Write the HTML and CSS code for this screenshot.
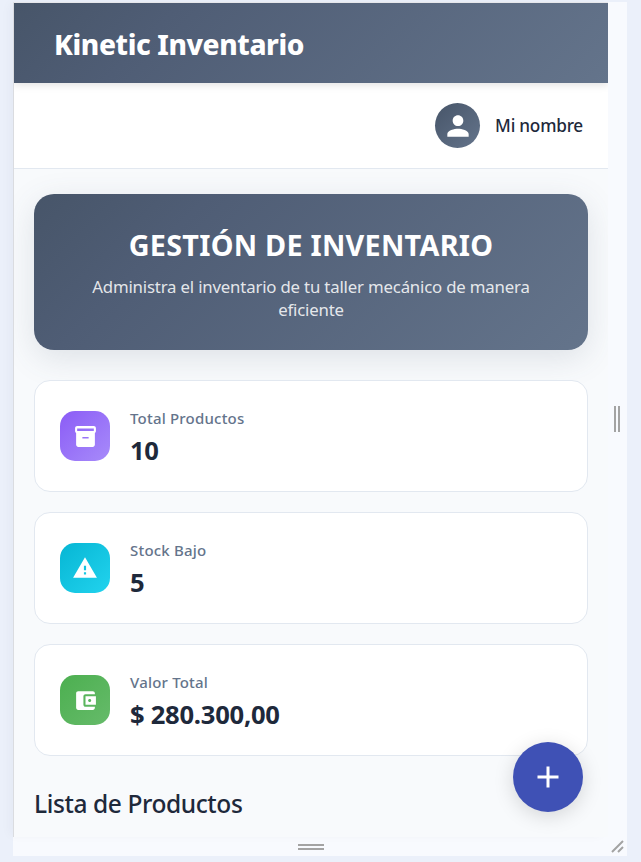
FILE: index.html
```html
<!DOCTYPE html>
<html lang="es">
<head>
<meta charset="utf-8">
<title>Kinetic Inventario</title>
<link rel="stylesheet" href="styles.css">
</head>
<body>
<div class="device">
  <div class="screen">
    <header class="topbar"><span class="brand">Kinetic Inventario</span></header>
    <div class="userbar">
      <div class="avatar"><svg width="32" height="32" viewBox="0 0 24 24" fill="currentColor"><path d="M12 12c2.21 0 4-1.79 4-4s-1.79-4-4-4-4 1.79-4 4 1.79 4 4 4zm0 2c-2.67 0-8 1.34-8 4v2h16v-2c0-2.66-5.33-4-8-4z"/></svg></div>
      <span class="username">Mi nombre</span>
    </div>
    <main class="content">
      <section class="hero">
        <h1>GESTIÓN DE INVENTARIO</h1>
        <p>Administra el inventario de tu taller mecánico de manera<br>eficiente</p>
      </section>
      <section class="stats">
        <article class="card">
          <div class="icon purple"><svg width="25" height="25" viewBox="0 0 24 24" fill="currentColor"><path fill-rule="evenodd" d="M20 2H4c-1 0-2 .9-2 2v3.010c0 .72.43 1.340 1 1.690V20c0 1.100 1.100 2 2 2h14c.9 0 2-.9 2-2V8.700c.57-.35 1-.97 1-1.690V4c0-1.100-1-2-2-2zm-5 12H9v-1.500h6V14zm5-7.200H4V4.400h16v2.400z"/></svg></div>
          <div><div class="label">Total Productos</div><div class="value">10</div></div>
        </article>
        <article class="card">
          <div class="icon cyan"><svg width="26" height="26" viewBox="0 0 24 24" fill="currentColor"><path d="M1 21h22L12 2 1 21zm12-3h-2v-2h2v2zm0-4h-2v-4h2v4z"/></svg></div>
          <div><div class="label">Stock Bajo</div><div class="value">5</div></div>
        </article>
        <article class="card">
          <div class="icon green"><svg width="25" height="25" viewBox="0 0 24 24" fill="currentColor"><path d="M21 18v1c0 1.100-.9 2-2 2H5c-1.110 0-2-.9-2-2V5c0-1.100.89-2 2-2h14c1.100 0 2 .9 2 2v1h-9c-1.110 0-2 .9-2 2v8c0 1.100.89 2 2 2h9zm-9-2h10V8H12v8zm4-2.500c-.83 0-1.500-.67-1.500-1.500s.67-1.500 1.500-1.500 1.500.67 1.500 1.500-.67 1.500-1.500 1.500z"/></svg></div>
          <div><div class="label">Valor Total</div><div class="value">$ 280.300,00</div></div>
        </article>
      </section>
      <h2>Lista de Productos</h2>
    </main>
    <button class="fab" aria-label="Agregar"><svg width="36" height="36" viewBox="0 0 24 24" fill="currentColor"><path d="M19 13h-6v6h-2v-6H5v-2h6V5h2v6h6z"/></svg></button>
  </div>
  <div class="grip-right"><i></i><i></i></div>
  <div class="grip-bottom"><i></i><i></i></div>
  <svg class="grip-corner" width="14" height="14" viewBox="0 0 14 14" stroke="#a3a3a3" stroke-width="2" fill="none"><path d="M1 12 12 1M7 12l5-5"/></svg>
</div>
</body>
</html>
```

FILE: styles.css
```css
* { box-sizing: border-box; }
body {
  margin: 0;
  height: 862px;
  padding: 2px 14px 6px 13px;
  overflow: hidden;
  background: #ebf0fa;
  font-family: "Noto Sans", "Open Sans", sans-serif;
  color: #1e293b;
}
.device {
  display: grid;
  grid-template-columns: 595px 19px;
  grid-template-rows: 835px 19px;
  background: #f8fafe;
}
.screen {
  position: relative;
  overflow: hidden;
  background: #f8fafc;
  border-left: 1px solid #dadce0;
  border-top: 1px solid #e6e7eb;
  box-shadow: -5px 0 10px -2px rgba(40, 50, 80, 0.04);
}
.topbar {
  position: relative;
  z-index: 1;
  height: 80px;
  padding-left: 40px;
  display: flex;
  align-items: center;
  background: linear-gradient(135deg, #475569 0%, #4f5d75 25%, #64748b 100%);
  box-shadow: 0 2px 8px rgba(0, 0, 0, 0.12);
}
.brand { color: #fff; font-weight: 800; font-size: 28px; line-height: 40px; letter-spacing: -0.38px; margin-top: 2px; }
.userbar {
  height: 86px;
  padding: 0 25px;
  display: flex;
  align-items: center;
  justify-content: flex-end;
  gap: 15px;
  background: #fff;
  border-bottom: 1px solid #e2e8f0;
}
.avatar {
  width: 45px;
  height: 45px;
  display: grid;
  place-items: center;
  border-radius: 50%;
  color: #fff;
  background: linear-gradient(135deg, #475569, #64748b);
}
.username { font-size: 17.200px; font-weight: 500; letter-spacing: -0.22px; }
.avatar svg, .icon svg, .fab svg { display: block; }
.content { padding: 25px 20px 0; }
.hero {
  height: 156px;
  padding-top: 31px;
  text-align: center;
  color: #fff;
  border-radius: 20px;
  background: linear-gradient(135deg, #475569 0%, #4f5d75 25%, #64748b 100%);
  box-shadow: 0 8px 32px rgba(71, 85, 105, 0.15);
}
.hero h1 { margin: 0; font-size: 28.800px; line-height: 40px; font-weight: 700; letter-spacing: 0.25px; }
.hero p { margin: 10px 0 0; font-size: 16.800px; line-height: 23px; letter-spacing: -0.18px; color: rgba(255, 255, 255, 0.86); }
.stats { margin-top: 30px; display: grid; gap: 20px; }
.card {
  height: 112px;
  padding: 2px 25px 0;
  display: flex;
  align-items: center;
  gap: 20px;
  background: #fff;
  border: 1px solid #e2e8f0;
  border-radius: 16px;
}
.icon { width: 50px; height: 50px; margin-top: -2px; display: grid; place-items: center; border-radius: 15px; color: #fff; }
.purple { background: linear-gradient(135deg, #8b5cf6, #a78bfa); }
.cyan { background: linear-gradient(135deg, #06b6d4, #22d3ee); }
.green { background: linear-gradient(135deg, #4caf50, #66bb6a); }
.label { font-size: 15px; line-height: 20px; font-weight: 500; letter-spacing: 0.2px; color: #64748b; }
.value { margin-top: 7px; font-size: 25.600px; line-height: 32px; font-weight: 700; letter-spacing: -0.27px; }
h2 { margin: 30px 0 0; font-size: 24.500px; line-height: 36px; font-weight: 500; letter-spacing: -0.4px; }
.fab {
  position: absolute;
  right: 25px;
  bottom: 25px;
  width: 70px;
  height: 70px;
  padding: 0;
  display: grid;
  place-items: center;
  border: 0;
  border-radius: 50%;
  color: #fff;
  background: #3f51b5;
  box-shadow: 0 4px 20px rgba(0, 0, 0, 0.15);
}
.grip-right, .grip-bottom { display: flex; gap: 2px; align-items: center; justify-content: center; }
.grip-right { padding: 0 1px 2px 0; }
.grip-bottom { flex-direction: column; }
.grip-right i { width: 2px; height: 26px; background: #a3a3a3; }
.grip-bottom i { width: 26px; height: 2px; background: #a3a3a3; }
.grip-corner { place-self: center; }
```
